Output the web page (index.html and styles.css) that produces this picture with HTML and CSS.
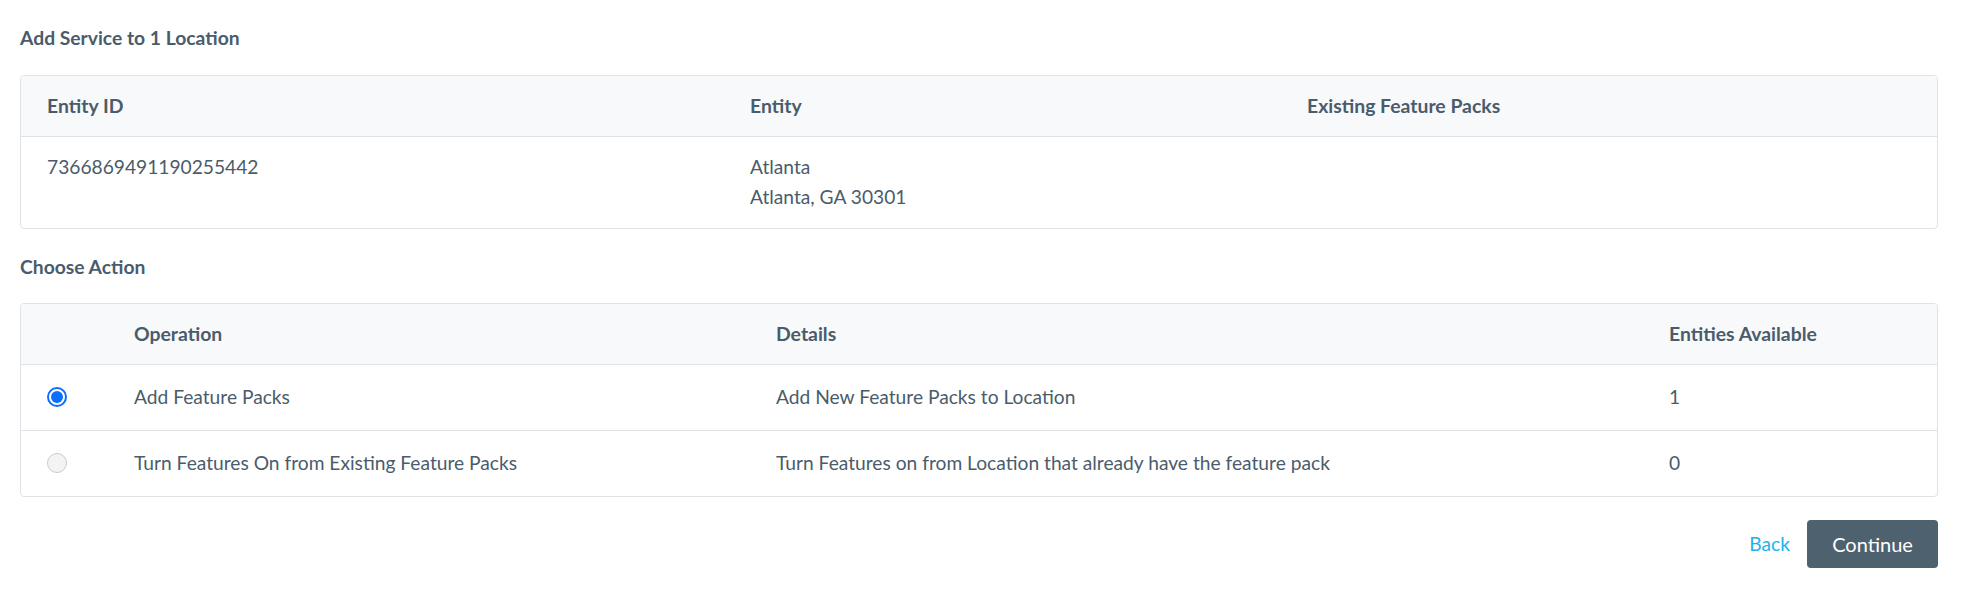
FILE: index.html
```html
<!DOCTYPE html>
<html lang="en">
<head>
<meta charset="utf-8">
<title>Add Service</title>
<link rel="stylesheet" href="styles.css">
</head>
<body>
<main class="page">
  <h2 class="section-title">Add Service to 1 Location</h2>
  <div class="card">
    <table class="grid">
      <colgroup><col class="c-id"><col class="c-entity"><col class="c-packs"></colgroup>
      <thead>
        <tr><th>Entity ID</th><th>Entity</th><th>Existing Feature Packs</th></tr>
      </thead>
      <tbody>
        <tr>
          <td>7366869491190255442</td>
          <td>Atlanta<br>Atlanta, GA 30301</td>
          <td></td>
        </tr>
      </tbody>
    </table>
  </div>

  <h2 class="section-title second">Choose Action</h2>
  <div class="card card-actions">
    <table class="grid actions">
      <colgroup><col class="c-radio"><col class="c-op"><col class="c-details"><col class="c-avail"></colgroup>
      <thead>
        <tr><th></th><th>Operation</th><th>Details</th><th>Entities Available</th></tr>
      </thead>
      <tbody>
        <tr>
          <td><span class="radio checked"></span></td>
          <td>Add Feature Packs</td>
          <td>Add New Feature Packs to Location</td>
          <td>1</td>
        </tr>
        <tr>
          <td><span class="radio"></span></td>
          <td>Turn Features On from Existing Feature Packs</td>
          <td>Turn Features on from Location that already have the feature pack</td>
          <td>0</td>
        </tr>
      </tbody>
    </table>
  </div>

  <div class="footer">
    <a class="back" href="#">Back</a>
    <button class="btn-primary" type="button">Continue</button>
  </div>
</main>
</body>
</html>
```

FILE: styles.css
```css
html, body {
  margin: 0;
  padding: 0;
  background: #ffffff;
}
body {
  font-family: Lato, "Open Sans", "Liberation Sans", sans-serif;
  font-size: 19.2px;
  line-height: 30px;
  color: #4a5c6b;
}
.page {
  padding: 23px 32px 0 20px;
}
.section-title {
  margin: 0;
  font-size: 19.3px;
  font-weight: 700;
  line-height: 30px;
  color: #4a5c6b;
}
.section-title.second {
  margin-top: 23px;
}
.card {
  margin-top: 22px;
  border: 1px solid #dfe3e7;
  border-radius: 4px;
  overflow: hidden;
}
.card-actions {
  margin-top: 21px;
}
.grid {
  width: 100%;
  border-collapse: collapse;
  table-layout: fixed;
}
.c-id { width: 703px; }
.c-entity { width: 557px; }
.c-packs { width: auto; }
.c-radio { width: 87px; }
.c-op { width: 642px; }
.c-details { width: 893px; }
.c-avail { width: auto; }
.grid th {
  background: #f8f9fa;
  font-weight: 700;
  font-size: 19.4px;
  text-align: left;
  padding: 15px 26px;
  border-bottom: 1px solid #dfe3e7;
  height: 30px;
}
.grid td {
  text-align: left;
  vertical-align: top;
  padding: 15px 26px 16px;
}
.actions td {
  padding: 17px 26px 18px;
  vertical-align: middle;
}
.actions tbody tr + tr td {
  border-top: 1px solid #dfe3e7;
}
.radio {
  display: block;
  box-sizing: border-box;
  width: 20px;
  height: 20px;
  border-radius: 50%;
  border: 1.5px solid #c8cacc;
  background: #f3f3f3;
}
.radio.checked {
  border: 2px solid #0d6efd;
  background: #ffffff;
  position: relative;
}
.radio.checked::after {
  content: "";
  position: absolute;
  left: 2px;
  top: 2px;
  width: 12px;
  height: 12px;
  border-radius: 50%;
  background: #0d6efd;
}
.footer {
  margin-top: 23px;
  display: flex;
  justify-content: flex-end;
  align-items: center;
  gap: 17px;
}
.back {
  color: #1bb4e8;
  text-decoration: none;
  font-size: 19.2px;
}
.btn-primary {
  font-family: inherit;
  font-size: 20px;
  color: #ffffff;
  background: #4e616f;
  border: none;
  border-radius: 4px;
  width: 131px;
  height: 48px;
  padding: 0;
  cursor: pointer;
}
```
